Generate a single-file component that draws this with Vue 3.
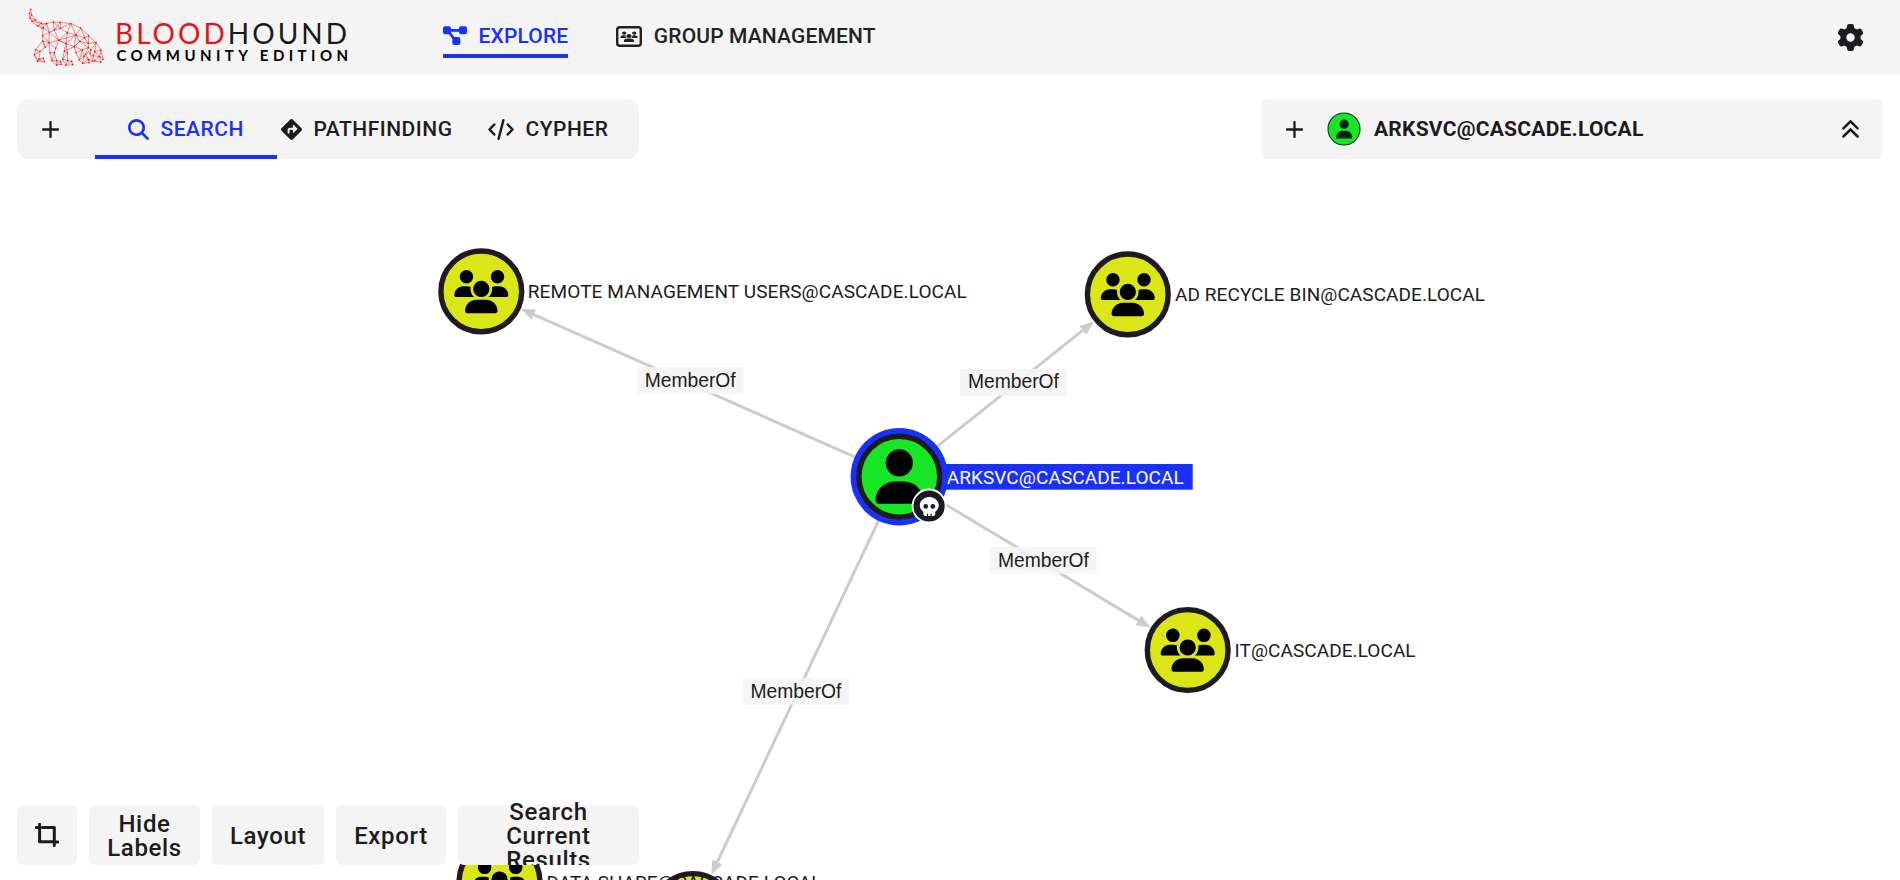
<script setup>
const usersPath =
  'M144 0a80 80 0 1 1 0 160A80 80 0 1 1 144 0zM512 0a80 80 0 1 1 0 160A80 80 0 1 1 512 0zM0 298.7C0 239.8 47.8 192 106.7 192h42.7c15.9 0 31 3.5 44.6 9.7c-1.3 7.2-1.9 14.7-1.9 22.3c0 38.2 16.8 72.5 43.3 96c-.2 0-.4 0-.7 0H21.3C9.6 320 0 310.4 0 298.7zM405.3 320c-.2 0-.4 0-.7 0c26.6-23.5 43.3-57.8 43.3-96c0-7.6-.7-15-1.9-22.3c13.6-6.3 28.7-9.7 44.6-9.7h42.7C592.2 192 640 239.8 640 298.7c0 11.8-9.6 21.3-21.3 21.3H405.3zM224 224a96 96 0 1 1 192 0 96 96 0 1 1 -192 0zM128 485.3C128 411.7 187.7 352 261.3 352H378.7C452.3 352 512 411.7 512 485.3c0 14.7-11.9 26.7-26.7 26.7H154.7c-14.7 0-26.7-11.9-26.7-26.7z'
const userPath =
  'M224 256A128 128 0 1 0 224 0a128 128 0 1 0 0 256zm-45.7 48C79.8 304 0 383.8 0 482.3C0 498.7 13.3 512 29.7 512H418.3c16.4 0 29.7-13.3 29.7-29.7C448 383.8 368.2 304 269.7 304H178.3z'
const skullPath =
  'M416 398.9c58.5-41.1 96-104.1 96-174.9C512 100.3 397.4 0 256 0S0 100.3 0 224c0 70.7 37.5 133.8 96 174.9c0 .4 0 .7 0 1.1v64c0 26.5 21.5 48 48 48h48V464c0-8.800 7.200-16 16-16s16 7.200 16 16v48h64V464c0-8.800 7.200-16 16-16s16 7.200 16 16v48h48c26.500 0 48-21.500 48-48V400c0-.400 0-.700 0-1.100zM96 256a64 64 0 1 1 128 0A64 64 0 1 1 96 256zm256-64a64 64 0 1 1 0 128 64 64 0 1 1 0-128z'

const center = { x: 899.3, y: 476.7 }
const groups = [
  { x: 481.3, y: 291.4, label: 'REMOTE MANAGEMENT USERS@CASCADE.LOCAL', lx: 527.8, len: 439 },
  { x: 1127.8, y: 294.4, label: 'AD RECYCLE BIN@CASCADE.LOCAL', lx: 1175, len: 310 },
  { x: 1187.7, y: 650, label: 'IT@CASCADE.LOCAL', lx: 1234.6, len: 181 },
  { x: 499.5, y: 882, label: 'DATA SHARE@CASCADE.LOCAL', lx: 546.5, len: 275 },
  { x: 692.8, y: 914, label: '', lx: 740, len: 0 },
]
const edges = [
  { to: groups[0], lx: 690.3, ly: 380.5 },
  { to: groups[1], lx: 1013.5, ly: 382.3 },
  { to: groups[2], lx: 1043.5, ly: 560.5 },
  { to: groups[4], lx: 796, ly: 691.5 },
].map((e) => {
  const dx = e.to.x - center.x
  const dy = e.to.y - center.y
  const d = Math.hypot(dx, dy)
  const ux = dx / d
  const uy = dy / d
  const tx = e.to.x - ux * 43.5
  const ty = e.to.y - uy * 43.5
  const bx = tx - ux * 14
  const by = ty - uy * 14
  return {
    ...e,
    bx,
    by,
    head: `${tx},${ty} ${bx - uy * 5.6},${by + ux * 5.6} ${bx + uy * 5.6},${by - ux * 5.6}`,
  }
})

// Wireframe hound: vertices and the strips that join them
const houndLines = [
  '32,28 28,40 30,54 36,64 52,78 66,84 70,83',
  '32,28 35,45 46,60 64,70 80,71 100,66 121,67 152,71 182,84 206,107 228,128 243,150 249,178 242,187 224,183',
  '28,40 35,45 30,54 46,60 36,64 64,70 52,78 80,71 66,84',
  '70,83 68,107 68,123 76,142 60,154 57,178 70,175 73,185 52,184 43,165 47,149 68,123',
  '47,149 60,154 43,165 57,178 52,184 70,175',
  '70,83 88,97 103,90 121,85 142,98 168,105 194,113 206,107',
  '80,71 88,97 68,107 87,128 88,97 116,121 103,90 100,66 121,85 121,67 103,90',
  '121,85 152,71 142,98 116,121 87,128 76,142 68,123 87,128',
  '152,71 168,105 182,84 194,113 179,124 168,105 138,131 116,121 168,105 163,140 179,124 205,143',
  '142,98 138,131 163,140 179,124',
  '87,128 90,158 103,158 96,182 110,195 124,193 122,185 110,182 103,158 107,145 87,128',
  '90,158 96,182 110,182 110,195 122,185',
  '107,145 116,121 138,131 133,153 128,178 143,182 137,196 128,178 142,158 133,153 163,140',
  '143,182 155,184 158,194 137,196 155,184',
  '142,158 143,182',
  '142,158 138,131',
  '163,140 168,158 178,180 188,190 207,188 205,178 192,168 187,150 163,140',
  '168,158 187,150 178,180 192,168 188,190 205,178',
  '187,150 205,143 197,163 207,180 219,184 210,160 213,150 228,128',
  '194,113 205,130 205,143 213,150 197,163',
  '206,107 205,130 228,128 224,155 243,150 239,170 224,155 219,167 224,183 239,170 249,178',
  '219,167 239,170 242,187',
  '179,124 205,130',
]
const houndDots = [...new Set(houndLines.flatMap((l) => l.split(' ')))].map((p) => p.split(','))
</script>

<template>
  <div class="app">
    <header class="topbar">
      <svg class="logo" width="360" height="75" viewBox="0 0 360 75">
        <g transform="translate(20 0) scale(0.3333)" class="hound">
          <polyline v-for="(l, i) in houndLines" :key="i" :points="l" />
          <circle v-for="(p, i) in houndDots" :key="'d' + i" :cx="p[0]" :cy="p[1]" r="2.4" />
        </g>
        <text class="brand" x="115" y="43.9" textLength="232"><tspan class="red">BLOOD</tspan>HOUND</text>
        <text class="edition" x="116.5" y="61" textLength="231.5">COMMUNITY EDITION</text>
      </svg>
      <nav class="nav">
        <a class="nav-item active">
          <svg width="24" height="21.33" viewBox="0 0 576 512"><path fill="currentColor" d="M0 80C0 53.5 21.5 32 48 32h96c26.5 0 48 21.5 48 48V96H384V80c0-26.5 21.5-48 48-48h96c26.5 0 48 21.5 48 48v96c0 26.5-21.5 48-48 48H432c-26.5 0-48-21.5-48-48V160H192v16c0 1.7-.1 3.4-.3 5L272 288h96c26.5 0 48 21.5 48 48v96c0 26.5-21.5 48-48 48H272c-26.5 0-48-21.5-48-48V336c0-1.7 .1-3.4 .3-5L144 224H48c-26.5 0-48-21.5-48-48V80z" /></svg>
          <span>EXPLORE</span>
        </a>
        <a class="nav-item group">
          <svg width="26" height="21" viewBox="0 0 26 21">
            <rect x="1.2" y="1.2" width="23.6" height="18.6" rx="2.6" fill="none" stroke="currentColor" stroke-width="2.4" />
            <g transform="translate(4.3 5.4) scale(0.0272 0.0205)"><path fill="currentColor" :d="usersPath" /></g>
          </svg>
          <span>GROUP MANAGEMENT</span>
        </a>
      </nav>
      <svg class="gear" width="27" height="27" viewBox="0 0 512 512"><path fill="currentColor" d="M495.9 166.6c3.2 8.7 .5 18.4-6.4 24.6l-43.3 39.4c1.1 8.3 1.7 16.8 1.7 25.4s-.6 17.1-1.7 25.4l43.3 39.4c6.9 6.2 9.6 15.9 6.4 24.6c-4.4 11.9-9.7 23.3-15.8 34.3l-4.7 8.1c-6.6 11-14 21.4-22.1 31.2c-5.9 7.2-15.7 9.6-24.5 6.8l-55.7-17.7c-13.4 10.3-28.2 18.9-44 25.4l-12.5 57.1c-2 9.1-9 16.3-18.2 17.8c-13.8 2.3-28 3.5-42.5 3.5s-28.7-1.2-42.5-3.5c-9.2-1.5-16.2-8.7-18.2-17.8l-12.5-57.1c-15.8-6.5-30.6-15.1-44-25.4L83.1 425.9c-8.8 2.8-18.6 .3-24.5-6.8c-8.1-9.8-15.5-20.2-22.1-31.2l-4.7-8.1c-6.1-11-11.4-22.4-15.8-34.3c-3.2-8.7-.5-18.4 6.4-24.6l43.3-39.4C64.6 273.1 64 264.6 64 256s.6-17.1 1.7-25.4L22.4 191.2c-6.9-6.2-9.6-15.9-6.4-24.6c4.4-11.9 9.7-23.3 15.8-34.3l4.7-8.1c6.6-11 14-21.4 22.1-31.2c5.9-7.2 15.7-9.6 24.5-6.8l55.7 17.7c13.4-10.3 28.2-18.9 44-25.4l12.5-57.1c2-9.1 9-16.3 18.2-17.8C227.3 1.2 241.5 0 256 0s28.7 1.2 42.5 3.5c9.2 1.5 16.2 8.7 18.2 17.8l12.5 57.1c15.8 6.5 30.6 15.1 44 25.4l55.7-17.7c8.8-2.8 18.6-.3 24.5 6.8c8.1 9.8 15.5 20.2 22.1 31.2l4.7 8.1c6.1 11 11.4 22.4 15.8 34.3zM256 336a80 80 0 1 0 0-160 80 80 0 1 0 0 160z" /></svg>
    </header>

    <svg class="graph" width="1900" height="805" viewBox="0 75 1900 805">
      <g v-for="(e, i) in edges" :key="'e' + i">
        <line :x1="center.x" :y1="center.y" :x2="e.bx" :y2="e.by" stroke="#ccc" stroke-width="3" />
        <polygon :points="e.head" fill="#ccc" />
      </g>
      <g v-for="(e, i) in edges" :key="'l' + i">
        <rect :x="e.lx - 53.3" :y="e.ly - 13.4" width="106.6" height="26.8" fill="#f4f4f4" fill-opacity="0.9" />
        <text class="edge-label" :x="e.lx - 45.6" :y="e.ly + 6" textLength="91">MemberOf</text>
      </g>
      <g v-for="(n, i) in groups" :key="'n' + i">
        <circle :cx="n.x" :cy="n.y" r="40.4" fill="#dbe617" stroke="#1d1b20" stroke-width="5.4" />
        <g :transform="`translate(${n.x - 27} ${n.y - 21.4}) scale(0.0844)`"><path :d="usersPath" /></g>
      </g>
      <text v-for="(n, i) in groups.slice(0, 4)" :key="'t' + i" class="node-label" :x="n.lx" :y="n.y + 6.900" :textLength="n.len">{{ n.label }}</text>

      <rect x="930" y="464" width="262.7" height="25.7" fill="#1a30ff" />
      <text class="node-label selected" x="946.7" y="483.7" textLength="237">ARKSVC@CASCADE.LOCAL</text>
      <circle :cx="center.x" :cy="center.y" r="48.7" fill="#1a30ff" />
      <circle :cx="center.x" :cy="center.y" r="40.4" fill="#17e625" stroke="#1d1b20" stroke-width="5.4" />
      <g transform="translate(875.5 449.2) scale(0.1063)"><path :d="userPath" /></g>
      <circle cx="929.1" cy="506" r="16.5" fill="#1d1b20" stroke="#fff" stroke-width="1.8" />
      <g transform="translate(919.8 496.900) scale(0.0371)"><path :d="skullPath" fill="#fff" /></g>
    </svg>

    <main class="overlay">
      <div class="panels">
        <section class="search-panel">
          <button class="plus"><svg width="17" height="17" viewBox="0 0 17 17"><path d="M8.5 1v15M1 8.5h15" /></svg></button>
          <div class="tab search">
            <svg width="21" height="21" viewBox="0 0 512 512"><path fill="currentColor" d="M416 208c0 45.9-14.9 88.3-40 122.7L502.6 457.4c12.5 12.5 12.5 32.8 0 45.3s-32.8 12.5-45.3 0L330.7 376c-34.4 25.2-76.8 40-122.7 40C93.1 416 0 322.9 0 208S93.1 0 208 0S416 93.1 416 208zM208 352a144 144 0 1 0 0-288 144 144 0 1 0 0 288z" /></svg>
            <span>SEARCH</span>
          </div>
          <div class="tab path">
            <svg width="21" height="21" viewBox="0 0 512 512"><path fill="currentColor" d="M227.7 11.7c15.6-15.6 40.9-15.6 56.6 0l216 216c15.6 15.6 15.6 40.9 0 56.6l-216 216c-15.6 15.6-40.9 15.6-56.6 0l-216-216c-15.6-15.6-15.6-40.9 0-56.6l216-216zm87.6 137c-4.6-4.6-11.5-5.9-17.4-3.5s-9.9 8.3-9.9 14.8v56H224c-35.3 0-64 28.7-64 64v48c0 13.3 10.7 24 24 24s24-10.7 24-24V280c0-8.8 7.2-16 16-16h64v56c0 6.5 3.9 12.3 9.9 14.8s12.9 1.1 17.4-3.5l80-80c6.2-6.2 6.2-16.4 0-22.6l-80-80z" /></svg>
            <span>PATHFINDING</span>
          </div>
          <div class="tab cypher">
            <svg width="26" height="21" viewBox="0 0 26 21"><path d="M6.3 5.5L1.5 10.5l4.8 5M19.7 5.5l4.8 5-4.8 5M15.4 1.3L10.6 19.7" fill="none" stroke="currentColor" stroke-width="2.5" stroke-linecap="round" stroke-linejoin="round" /></svg>
            <span>CYPHER</span>
          </div>
        </section>

        <section class="info-panel">
          <button class="plus"><svg width="17" height="17" viewBox="0 0 17 17"><path d="M8.5 1v15M1 8.5h15" /></svg></button>
          <svg class="avatar" width="34" height="34" viewBox="0 0 34 34">
            <circle cx="17" cy="17" r="16" fill="#17e625" stroke="#123314" stroke-width="1.1" />
            <g transform="translate(9.1 7.5) scale(0.0361 0.0371)"><path :d="userPath" fill="#06240a" /></g>
          </svg>
          <strong>ARKSVC@CASCADE.LOCAL</strong>
          <svg class="collapse" width="17" height="18" viewBox="0 0 17 18"><path d="M1.4 8.3l7.1-7 7.1 7M1.400 16.500l7.100-7 7.100 7" fill="none" stroke="currentColor" stroke-width="2.500" stroke-linecap="round" /></svg>
        </section>
      </div>

      <div class="toolbar">
        <button class="tool crop">
          <svg width="24" height="24" viewBox="0 0 24 24"><path d="M4.6 1.3v17.4h13M1.3 4.6h3M7.3 4.6h12v17.8M19.3 19h3.4" fill="none" stroke="currentColor" stroke-width="3" stroke-linecap="round" stroke-linejoin="round" /></svg>
        </button>
        <button class="tool hide">Hide Labels</button>
        <button class="tool layout">Layout</button>
        <button class="tool export">Export</button>
        <button class="tool current"><span>Search Current Results</span></button>
      </div>
    </main>
  </div>
</template>

<style>
body {
  margin: 0;
  overflow: hidden;
  background: #fff;
}
</style>

<style scoped>
.app {
  position: relative;
  display: flex;
  flex-direction: column;
  width: 1900px;
  height: 880px;
  overflow: hidden;
  background: #fff;
  color: #1d1b20;
  font-family: Roboto, "Liberation Sans", sans-serif;
}
svg {
  display: block;
  flex: none;
}
button {
  box-sizing: border-box;
  border: 0;
  padding: 0;
  margin: 0;
  background: none;
  color: inherit;
  font: inherit;
}
.topbar {
  display: flex;
  flex: none;
  height: 75px;
  background: #f4f4f4;
}
.hound polyline {
  fill: none;
  stroke: #ee2222;
  stroke-width: 2;
  stroke-opacity: 0.8;
}
.hound circle {
  fill: #ea1414;
}
.brand {
  font-family: Lato, sans-serif;
  font-size: 28px;
  fill: #1a1a1a;
}
.brand .red {
  fill: #ea1212;
}
.edition {
  font-family: Lato, sans-serif;
  font-size: 15px;
  font-weight: 700;
  fill: #000;
}
.nav {
  display: flex;
  gap: 48px;
  margin-left: 83px;
}
.nav-item {
  display: flex;
  align-items: center;
  height: 32px;
  margin-top: 20px;
  padding-bottom: 2px;
  border-bottom: 4px solid transparent;
  font-size: 21px;
  font-weight: 500;
  line-height: 32px;
  color: #222;
  white-space: nowrap;
}
.nav-item span {
  margin-left: 11.5px;
  letter-spacing: 0.15px;
}
.nav-item.active {
  color: #1a30ff;
  border-bottom-color: #1a30ff;
}
.gear {
  margin: 24px 36.5px 0 auto;
}
.graph {
  position: absolute;
  left: 0;
  top: 75px;
}
.node-label {
  font-size: 19px;
  fill: #1d1b20;
}
.node-label.selected {
  fill: #fff;
}
.edge-label {
  font-family: "Liberation Sans", Arial, sans-serif;
  font-size: 19.3px;
  fill: #1d1b20;
}
.overlay {
  position: relative;
  display: flex;
  flex: 1;
  flex-direction: column;
  justify-content: space-between;
  padding: 24px 17px 15px;
}
.panels {
  display: flex;
  justify-content: space-between;
}
.search-panel,
.info-panel {
  display: flex;
  box-sizing: border-box;
  width: 622px;
  height: 60px;
  background: #f4f4f4;
}
.search-panel {
  border-radius: 12px;
}
.info-panel {
  align-items: center;
  border-radius: 6px;
}
.plus path {
  fill: none;
  stroke: currentColor;
  stroke-width: 2.3px;
  stroke-linecap: round;
}
.search-panel .plus {
  display: flex;
  flex: none;
  align-items: center;
  width: 78px;
  padding-left: 25px;
}
.info-panel .plus {
  margin-left: 24.5px;
}
.tab {
  display: flex;
  flex: none;
  box-sizing: border-box;
  align-items: center;
  height: 60px;
  font-size: 21px;
  font-weight: 500;
  letter-spacing: 0.5px;
}
.tab span {
  margin-left: 11.5px;
}
.tab.search {
  width: 182px;
  padding: 4px 0 0 33px;
  border-bottom: 4px solid #1a30ff;
  color: #1a30ff;
}
.tab.path {
  width: 207px;
  padding-left: 4px;
}
.tab.cypher {
  padding-left: 4px;
}
.avatar {
  margin-left: 24px;
}
.info-panel strong {
  margin-left: 13.5px;
  font-size: 21px;
  font-weight: 700;
  letter-spacing: 0.25px;
}
.collapse {
  margin-left: auto;
  margin-right: 24.500px;
}
.toolbar {
  display: flex;
  gap: 12px;
  height: 60px;
}
.tool {
  display: flex;
  align-items: center;
  justify-content: center;
  height: 60px;
  padding-top: 2px;
  border-radius: 6px;
  background: #f4f4f4;
  font-size: 24px;
  font-weight: 500;
  line-height: 24px;
  letter-spacing: 0.65px;
  text-align: center;
}
.crop {
  width: 60px;
  padding-top: 0;
}
.hide {
  width: 111px;
  padding-left: 15px;
  padding-right: 15px;
}
.layout {
  width: 112px;
}
.export {
  width: 110px;
}
.current {
  width: 181px;
  clip-path: inset(-10px 0 0 0);
}
.current span {
  width: 100px;
}
</style>
